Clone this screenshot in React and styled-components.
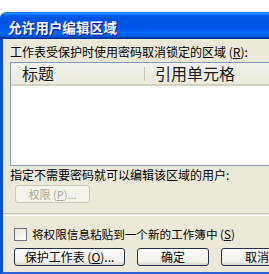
import React from 'react';
import styled, { createGlobalStyle } from 'styled-components';

const GlobalStyle = createGlobalStyle`
    html, body {
        margin: 0;
        padding: 0;
        overflow: hidden;
        background: #fff;
    }

    body {
        font-family: 'Noto Sans CJK SC', 'Liberation Sans', sans-serif;
    }
`;

const Page = styled.div`
    width: 269px;
    height: 274px;
    padding-top: 12px;
    box-sizing: border-box;
    overflow: hidden;
`;

const Dialog = styled.div`
    width: 330px;
    border-top-left-radius: 6px;
    overflow: hidden;
`;

const TitleBar = styled.div`
    height: 27px;
    box-sizing: border-box;
    padding: 2px 0 0 8px;
    display: flex;
    align-items: center;
    background: linear-gradient(
        #0058ee 0%,
        #3593ff 4%,
        #288eff 6%,
        #127dff 8%,
        #036ffc 10%,
        #0262ee 14%,
        #0057e5 20%,
        #0054e3 24%,
        #0055eb 56%,
        #005bf5 66%,
        #026afe 76%,
        #0062ef 86%,
        #0052d6 92%,
        #0040ab 94%,
        #003092 100%
    );

    h1 {
        margin: 0;
        color: #fff;
        font-size: 13.6px;
        font-weight: bold;
        line-height: 16px;
        text-shadow: 1px 1px #0f1089;
    }
`;

const Frame = styled.div`
    border-left: 3px solid #0a4fd6;
    border-bottom: 3px solid #2a63d8;
    background: #ece9d8;
    padding: 6px 0 6px 7px;
    display: flex;
    flex-direction: column;
    align-items: flex-start;
`;

const Label = styled.div`
    font-size: 12px;
    line-height: 14px;
    color: #000;
    white-space: nowrap;
    margin-top: ${(p) => p.$top || 0}px;
`;

const ListBox = styled.div`
    margin-top: 3px;
    width: 310px;
    height: 104px;
    box-sizing: border-box;
    border: 1px solid #7f9db9;
    background: #fff;
`;

const ListHeader = styled.div`
    display: flex;
    height: 21px;
    background: linear-gradient(#f3f2ec, #ebeadb);
    border-bottom: 2px solid #d6d2c2;
`;

const Column = styled.div`
    width: ${(p) => p.$width}px;
    padding-left: ${(p) => p.$pad}px;
    box-sizing: border-box;
    font-size: 16px;
    line-height: 21px;
    color: #1a1a1a;
    position: relative;

    &::after {
        content: '';
        display: ${(p) => (p.$divider ? 'block' : 'none')};
        position: absolute;
        right: 0;
        top: 4px;
        bottom: 3px;
        width: 1px;
        background: #c7c5b2;
    }
`;

const Button = styled.button`
    width: ${(p) => p.$width}px;
    height: 18px;
    padding: 0;
    box-sizing: border-box;
    font-family: inherit;
    font-size: 12px;
    line-height: 16px;
    color: #000;
    border: 1px solid #22324d;
    border-radius: 3px;
    background: linear-gradient(#ffffff, #f0efe8 80%, #d8d5c8);
    white-space: nowrap;

    &:disabled {
        color: #aca899;
        border-color: #c9c7ba;
        background: #f5f4ea;
        font-size: 11px;
    }
`;

const PermButton = styled(Button)`
    margin: 3px 0 0 5px;
`;

const Separator = styled.div`
    margin-top: 10px;
    margin-left: -7px;
    width: 340px;
    height: 1px;
    border-top: 1px solid #c5c2b2;
    border-bottom: 1px solid #fff;
`;

const CheckRow = styled.label`
    margin: 11px 0 0 4px;
    display: flex;
    align-items: center;
    gap: 5px;
    font-size: 11.6px;
    line-height: 14px;
    white-space: nowrap;
`;

const Box = styled.span`
    width: 11px;
    height: 11px;
    border: 1px solid #6d7580;
    background: linear-gradient(135deg, #e6e4dc, #ffffff);
`;

const ButtonRow = styled.div`
    margin: 7px 0 0 4px;
    display: flex;
    gap: 12px;
`;

const App = () => (
    <>
        <GlobalStyle />
        <Page>
            <Dialog>
                <TitleBar>
                    <h1>允许用户编辑区域</h1>
                </TitleBar>
                <Frame>
                    <Label>
                        工作表受保护时使用密码取消锁定的区域 (<u>R</u>):
                    </Label>
                    <ListBox>
                        <ListHeader>
                            <Column $width={134} $pad={11} $divider>
                                标题
                            </Column>
                            <Column $width={170} $pad={10}>
                                引用单元格
                            </Column>
                        </ListHeader>
                    </ListBox>
                    <Label $top={2}>指定不需要密码就可以编辑该区域的用户:</Label>
                    <PermButton $width={75} disabled>
                        权限 (<u>P</u>)...
                    </PermButton>
                    <Separator />
                    <CheckRow>
                        <Box />
                        <span>
                            将权限信息粘贴到一个新的工作簿中 (<u>S</u>)
                        </span>
                    </CheckRow>
                    <ButtonRow>
                        <Button $width={111}>
                            保护工作表 (<u>O</u>)...
                        </Button>
                        <Button $width={72}>确定</Button>
                        <Button $width={72}>取消</Button>
                    </ButtonRow>
                </Frame>
            </Dialog>
        </Page>
    </>
);

export default App;
